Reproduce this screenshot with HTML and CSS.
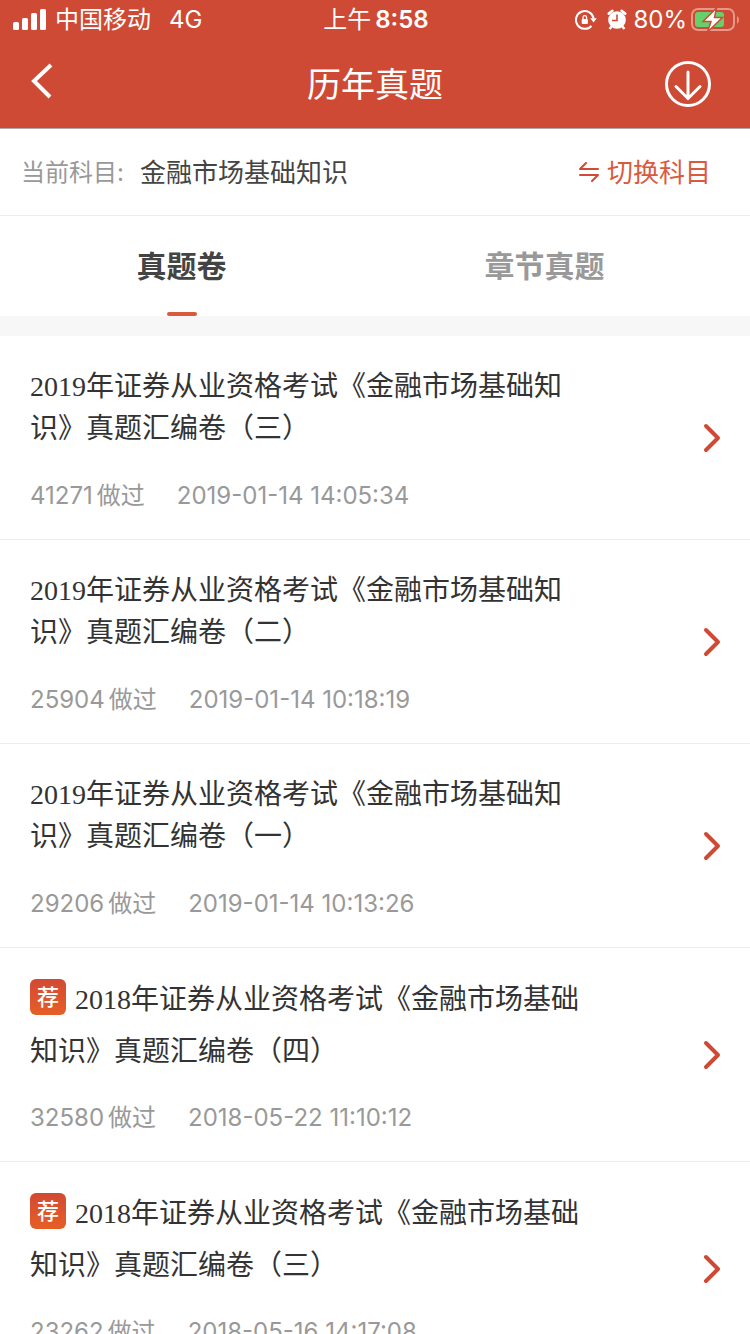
FILE: index.html
```html
<!DOCTYPE html>
<html lang="zh-CN">
<head>
<meta charset="utf-8">
<meta name="viewport" content="width=device-width, initial-scale=1">
<title>历年真题</title>
<link rel="stylesheet" href="styles.css">
</head>
<body>
<header class="top">
  <div class="status">
    <div class="status-left">
      <svg width="34" height="24" viewBox="0 0 34 24" fill="#fff"><rect x="0" y="14" width="6" height="8" rx="1.500"/><rect x="9" y="10" width="6" height="12" rx="1.500"/><rect x="18" y="5" width="6" height="17" rx="1.500"/><rect x="27" y="1" width="6" height="21" rx="1.500"/></svg>
      <span>中国移动</span><span class="network">4G</span>
    </div>
    <div class="status-time"><span>上午</span><span class="clock">8:58</span></div>
    <div class="status-right">
      <svg width="22" height="22" viewBox="0 0 22 22" fill="none"><path d="M18.600 9.300A8.900 8.900 0 1 0 16.400 17" stroke="#fff" stroke-width="2"/><path d="M15.200 9.300h6.600l-3.300 4.200z" fill="#fff"/><rect x="6.700" y="10" width="6.200" height="5" rx="1" fill="#fff"/><path d="M8 10.500V8.500a1.800 1.800 0 0 1 3.600 0v2" stroke="#fff" stroke-width="1.300"/></svg>
      <svg class="alarm" width="20" height="22" viewBox="0 0 20 22"><circle cx="10" cy="11" r="8.800" fill="#fff"/><path d="M1.800 4.600L5.400 1.800M18.200 4.600L14.600 1.800" fill="none" stroke="#fff" stroke-width="2.600" stroke-linecap="round"/><path d="M4.500 17.500L2.600 20M15.500 17.500l1.900 2.500" stroke="#fff" stroke-width="2.400"/><path d="M10 5.500v6H5" fill="none" stroke="#cf4a34" stroke-width="1.600"/></svg>
      <span>80%</span>
      <svg class="battery" width="48" height="24" viewBox="0 0 48 24"><rect x="1" y="1" width="42" height="21" rx="6" fill="none" stroke="#e5988b" stroke-width="2"/><path d="M46 8q2 1.200 2 4t-2 4z" fill="#e5988b"/><rect x="4" y="4" width="29" height="15" rx="3" fill="#66d06b"/><path d="M25.500 0L12 13.500h8L16.500 24l15-14.500h-8z" fill="#fff" stroke="#cf4a34" stroke-width="1.500"/></svg>
    </div>
  </div>
  <nav class="navbar">
    <button class="icon-button back" aria-label="返回"><svg width="22" height="36" viewBox="0 0 22 36"><path d="M20 2L3 18l16 16" fill="none" stroke="#fff" stroke-width="4"/></svg></button>
    <h1>历年真题</h1>
    <button class="icon-button" aria-label="下载"><svg width="46" height="46" viewBox="0 0 46 46" fill="none" stroke="#fff" stroke-width="3"><circle cx="23" cy="23" r="21.500"/><path d="M23 11v26M11 25.500l12 12 12-12" stroke-linecap="round"/></svg></button>
  </nav>
</header>
<section class="subject">
  <span class="subject-label">当前科目:</span>
  <strong class="subject-name">金融市场基础知识</strong>
  <button class="switch"><svg width="22" height="22" viewBox="0 0 22 22" fill="none" stroke="#d04b33" stroke-width="2" stroke-linecap="round" stroke-linejoin="round"><path d="M20 7H2l6-6M2 13h18l-6 6"/></svg>切换科目</button>
</section>
<div class="tabs" role="tablist">
  <button class="tab tab-active" role="tab" aria-selected="true">真题卷</button>
  <button class="tab" role="tab" aria-selected="false">章节真题</button>
</div>
<main class="papers">
  <a class="paper" href="#"><div class="paper-body"><h2>2019年证券从业资格考试《金融市场基础知识》真题汇编卷（三）</h2><p class="meta"><span>41271<i>做过</i></span><time>2019-01-14 14:05:34</time></p></div><svg class="chevron" width="18" height="30" viewBox="0 0 18 30"><path d="M3 3l12 12L3 27"/></svg></a>
  <a class="paper" href="#"><div class="paper-body"><h2>2019年证券从业资格考试《金融市场基础知识》真题汇编卷（二）</h2><p class="meta"><span>25904<i>做过</i></span><time>2019-01-14 10:18:19</time></p></div><svg class="chevron" width="18" height="30" viewBox="0 0 18 30"><path d="M3 3l12 12L3 27"/></svg></a>
  <a class="paper" href="#"><div class="paper-body"><h2>2019年证券从业资格考试《金融市场基础知识》真题汇编卷（一）</h2><p class="meta"><span>29206<i>做过</i></span><time>2019-01-14 10:13:26</time></p></div><svg class="chevron" width="18" height="30" viewBox="0 0 18 30"><path d="M3 3l12 12L3 27"/></svg></a>
  <a class="paper recommended" href="#"><div class="paper-body"><h2><span class="badge">荐</span>2018年证券从业资格考试《金融市场基础知识》真题汇编卷（四）</h2><p class="meta"><span>32580<i>做过</i></span><time>2018-05-22 11:10:12</time></p></div><svg class="chevron" width="18" height="30" viewBox="0 0 18 30"><path d="M3 3l12 12L3 27"/></svg></a>
  <a class="paper recommended" href="#"><div class="paper-body"><h2><span class="badge">荐</span>2018年证券从业资格考试《金融市场基础知识》真题汇编卷（三）</h2><p class="meta"><span>23262<i>做过</i></span><time>2018-05-16 14:17:08</time></p></div><svg class="chevron" width="18" height="30" viewBox="0 0 18 30"><path d="M3 3l12 12L3 27"/></svg></a>
</main>
</body>
</html>
```
FILE: styles.css
```css
* { box-sizing: border-box; }
html, body { height: 100%; }
body {
  margin: 0;
  display: flex;
  flex-direction: column;
  overflow: hidden;
  background: #fff;
  color: #333;
  font-family: Inter, "Noto Sans CJK SC", sans-serif;
}
h1, h2, p { margin: 0; font-weight: 400; }
button { border: 0; padding: 0; background: none; font: inherit; color: inherit; cursor: pointer; }
svg { display: block; flex: none; }

.top { flex: none; background: #cf4a34; color: #fff; border-bottom: 1px solid #b0aaa8; }
.status {
  display: grid;
  grid-template-columns: 1fr auto 1fr;
  align-items: center;
  height: 40px;
  padding: 0 11px 0 13px;
  font-size: 24px;
  line-height: 40px;
}
.status-left, .status-time, .status-right { display: flex; align-items: center; }
.status-left { gap: 8px; }
.network { margin-left: 10px; }
.status-time { gap: 4px; }
.clock { font-weight: 600; }
.status-right { justify-content: flex-end; }
.alarm { margin: 0 6px 0 10px; }
.battery { margin-left: 4px; }

.navbar { display: flex; align-items: center; justify-content: space-between; height: 88px; padding: 0 39px 0 31px; }
.navbar h1 { flex: 1; padding: 2px 0 0 32px; text-align: center; font-size: 34px; line-height: 48px; }
.back { padding-bottom: 6px; }

.subject {
  flex: none;
  display: flex;
  align-items: center;
  height: 87px;
  padding: 2px 39px 0 21px;
  border-bottom: 1px solid #ececec;
  line-height: 40px;
}
.subject-label { margin-right: 16px; font-size: 24px; color: #999; }
.subject-name { font-size: 26px; font-weight: 400; color: #444; }
.switch { display: flex; align-items: center; gap: 7px; margin-left: auto; font-size: 26px; color: #d95b3e; }

.tabs { flex: none; display: flex; height: 120px; padding-right: 24px; border-bottom: 20px solid #f7f7f7; }
.tab {
  flex: 1;
  display: flex;
  flex-direction: column;
  align-items: center;
  justify-content: space-between;
  padding-top: 28px;
  font-size: 30px;
  line-height: 44px;
  font-weight: 600;
  color: #999;
}
.tab-active { color: #444; }
.tab-active::after { content: ""; width: 30px; height: 4px; border-radius: 2px; background: #d95b3e; }

.papers { flex: 1; min-height: 0; overflow: hidden; }
.paper {
  display: flex;
  align-items: center;
  justify-content: space-between;
  padding: 30px 29px 29px 30px;
  border-bottom: 1px solid #ececec;
  color: inherit;
  text-decoration: none;
}
.paper-body { width: 80%; }
.paper h2 { font-family: "Liberation Serif", "Noto Sans CJK SC", sans-serif; font-size: 28px; line-height: 42px; }
.meta { display: flex; gap: 32px; margin-top: 32px; font-size: 24px; line-height: 28px; color: #999; }
.meta i { margin-left: 4px; font-style: normal; }
.chevron path { fill: none; stroke: #cf4a34; stroke-width: 4; stroke-linecap: round; stroke-linejoin: round; }

.recommended h2 { margin-top: -4px; line-height: 52px; }
.recommended .meta { margin-top: 26px; }
.badge {
  display: inline-block;
  height: 36px;
  margin-right: 9px;
  padding: 0 7px;
  border-radius: 6px;
  background: linear-gradient(#d24934, #e65f26);
  color: #fff;
  font-family: "Noto Sans CJK SC", sans-serif;
  font-size: 22px;
  font-weight: 500;
  line-height: 32px;
  vertical-align: 4px;
}
```
